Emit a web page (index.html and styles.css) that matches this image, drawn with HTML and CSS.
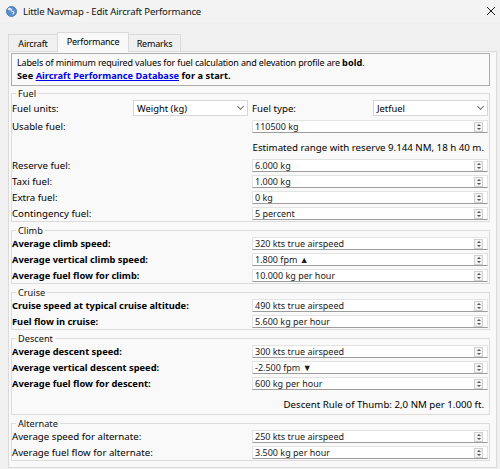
FILE: index.html
```html
<!DOCTYPE html>
<html>
<head>
  <title>Little Navmap - Edit Aircraft Performance</title>
  <link rel="stylesheet" href="styles.css">
</head>
<body>
  <div class="titlebar">
    <svg class="globe" width="11" height="11" viewBox="0 0 11 11">
      <circle cx="5.5" cy="5.5" r="5" fill="#5b8fd0" stroke="#3a669e" stroke-width="0.8"/>
      <path d="M2 3.5c1-1 2.5-1.2 3.2-.4.6.7-.4 1.4.2 2 .7.6 1.8.1 2.3.9.4.7-.3 1.8-1.2 2.2" fill="none" stroke="#e6eef7" stroke-width="1.2"/>
      <circle cx="3.6" cy="3" r="1.3" fill="#dfe9f5" opacity="0.8"/>
    </svg>
    <span class="title">Little Navmap - Edit Aircraft Performance</span>
    <svg class="close" width="8" height="8" viewBox="0 0 8 8">
      <path d="M0 0L8 8M8 0L0 8" stroke="#1a1a1a" stroke-width="1"/>
    </svg>
  </div>

  <div class="tabs">
    <div class="tab tab-aircraft">Aircraft</div>
    <div class="tab tab-perf active">Performance</div>
    <div class="tab tab-remarks">Remarks</div>
  </div>

  <div class="pane">
    <div class="info">
      <div>Labels of minimum required values for fuel calculation and elevation profile are <b>bold</b>.</div>
      <div><b>See <a href="#">Aircraft Performance Database</a> for a start.</b></div>
    </div>

    <fieldset class="group">
      <legend>Fuel</legend>
      <div class="rows">
        <div class="row units">
          <span>Fuel units:</span>
          <div class="combo">Weight (kg)</div>
          <span class="type-label">Fuel type:</span>
          <div class="combo">Jetfuel</div>
        </div>
        <div class="row"><span>Usable fuel:</span><div class="spin">110500 kg<span class="spin-btn"></span></div></div>
        <div class="note">Estimated range with reserve 9.144 NM, 18 h 40 m.</div>
        <div class="row"><span>Reserve fuel:</span><div class="spin">6.000 kg<span class="spin-btn"></span></div></div>
        <div class="row"><span>Taxi fuel:</span><div class="spin">1.000 kg<span class="spin-btn"></span></div></div>
        <div class="row"><span>Extra fuel:</span><div class="spin">0 kg<span class="spin-btn"></span></div></div>
        <div class="row"><span>Contingency fuel:</span><div class="spin">5 percent<span class="spin-btn"></span></div></div>
      </div>
    </fieldset>

    <fieldset class="group">
      <legend>Climb</legend>
      <div class="rows">
        <div class="row"><b>Average climb speed:</b><div class="spin">320 kts true airspeed<span class="spin-btn"></span></div></div>
        <div class="row"><b>Average vertical climb speed:</b><div class="spin">1.800 fpm ▲<span class="spin-btn"></span></div></div>
        <div class="row"><b>Average fuel flow for climb:</b><div class="spin">10.000 kg per hour<span class="spin-btn"></span></div></div>
      </div>
    </fieldset>

    <fieldset class="group">
      <legend>Cruise</legend>
      <div class="rows">
        <div class="row"><b>Cruise speed at typical cruise altitude:</b><div class="spin">490 kts true airspeed<span class="spin-btn"></span></div></div>
        <div class="row"><b>Fuel flow in cruise:</b><div class="spin">5.600 kg per hour<span class="spin-btn"></span></div></div>
      </div>
    </fieldset>

    <fieldset class="group">
      <legend>Descent</legend>
      <div class="rows">
        <div class="row"><b>Average descent speed:</b><div class="spin">300 kts true airspeed<span class="spin-btn"></span></div></div>
        <div class="row"><b>Average vertical descent speed:</b><div class="spin">-2.500 fpm ▼<span class="spin-btn"></span></div></div>
        <div class="row"><b>Average fuel flow for descent:</b><div class="spin">600 kg per hour<span class="spin-btn"></span></div></div>
        <div class="note">Descent Rule of Thumb: 2,0 NM per 1.000 ft.</div>
      </div>
    </fieldset>

    <fieldset class="group">
      <legend>Alternate</legend>
      <div class="rows">
        <div class="row"><span>Average speed for alternate:</span><div class="spin">250 kts true airspeed<span class="spin-btn"></span></div></div>
        <div class="row"><span>Average fuel flow for alternate:</span><div class="spin">3.500 kg per hour<span class="spin-btn"></span></div></div>
      </div>
    </fieldset>
  </div>
</body>
</html>
```

FILE: styles.css
```css
* {
  box-sizing: border-box;
}

body {
  margin: 0;
  width: 500px;
  height: 469px;
  overflow: hidden;
  background-color: #f0f0f0;
  font-family: "Noto Sans", "Liberation Sans", sans-serif;
  font-size: 9.7px;
  color: #000;
}

.titlebar {
  height: 22px;
  display: flex;
  align-items: center;
  padding: 0 5px 0 6px;
  background-color: #f3f3f3;
}

.globe {
  margin-right: 6px;
}

.title {
  flex: 1;
  font-size: 9.6px;
  letter-spacing: -0.15px;
  color: #111;
}

/* tabs */
.tabs {
  display: flex;
  align-items: flex-end;
  height: 19px;
  margin: 10px 0 0 8px;
  font-size: 9px;
  letter-spacing: -0.2px;
}

.tab {
  height: 17px;
  display: flex;
  align-items: center;
  justify-content: center;
  border: 1px solid #dadada;
  border-bottom: none;
  background-color: #f0f0f0;
}

.tab-aircraft {
  width: 50px;
}

.tab-perf {
  width: 72px;
  margin-left: -1px;
}

.tab-remarks {
  width: 53px;
  margin-left: -1px;
}

.tab.active {
  height: 20px;
  margin-bottom: -1px;
  padding-bottom: 3px;
  background-color: #f9f9f9;
  position: relative;
  z-index: 1;
}

.pane {
  height: 417px;
  margin: 0 3px 0 8px;
  padding: 1px 6px 0 2px;
  border: 1px solid #dadada;
  background-color: #f9f9f9;
}

.info {
  padding: 3px 5px 3px;
  font-size: 9px;
  letter-spacing: -0.15px;
  line-height: 12.5px;
  border: 1px solid #adadad;
}

.info div {
  height: 12.5px;
}

.info b {
  font-size: 9.2px;
  letter-spacing: 0.05px;
}

.info a {
  color: #0000ee;
}

/* group boxes */
.group {
  margin: 2px 0 0;
  padding: 1px 1px 1px 0;
  min-width: 0;
  border: 1px solid #dcdcdc;
}

.group + .group {
  margin-top: 3px;
}

.group legend {
  margin-left: 4px;
  padding: 0 2px;
  height: 11px;
  font-size: 9.2px;
  line-height: 11px;
  color: #111;
}

.rows {
  display: flex;
  flex-direction: column;
  gap: 3px;
}

.row {
  display: grid;
  grid-template-columns: 240px 236px;
  align-items: center;
  height: 13px;
  white-space: nowrap;
}

.row b {
  font-size: 9.3px;
}

.row.units {
  grid-template-columns: 121px 115px 125px 115px;
  height: 17px;
  align-items: start;
}

.row.units span {
  line-height: 17px;
}

.type-label {
  padding-left: 4px;
}

.combo {
  height: 16px;
  display: flex;
  align-items: center;
  justify-content: space-between;
  padding: 0 4px 0 3px;
  font-size: 9.4px;
  background-color: #fff;
  border: 1px solid #d6d6d6;
}

.combo::after {
  content: "";
  width: 4px;
  height: 4px;
  margin-top: -3px;
  border-right: 1px solid #707070;
  border-bottom: 1px solid #707070;
  transform: rotate(45deg);
}

.spin {
  height: 13px;
  display: flex;
  align-items: center;
  justify-content: space-between;
  padding: 0 4px 0 2px;
  font-size: 9px;
  background-color: #fff;
  border: 1px solid #e3e3e3;
  border-bottom-color: #9c9c9c;
  color: #1a1a1a;
}

.spin-btn {
  width: 9px;
  height: 10px;
  display: flex;
  flex-direction: column;
  align-items: center;
  justify-content: center;
  gap: 2px;
  border: 1px solid #d0d0d0;
  background-color: #f3f3f3;
}

.spin-btn::before {
  content: "";
  border-left: 2.5px solid transparent;
  border-right: 2.5px solid transparent;
  border-bottom: 2.5px solid #555;
}

.spin-btn::after {
  content: "";
  border-left: 2.5px solid transparent;
  border-right: 2.5px solid transparent;
  border-top: 2.5px solid #555;
}

.note {
  height: 20px;
  display: flex;
  align-items: flex-end;
  justify-content: flex-end;
  padding: 0 4px 3px 0;
  line-height: 11px;
}
```
